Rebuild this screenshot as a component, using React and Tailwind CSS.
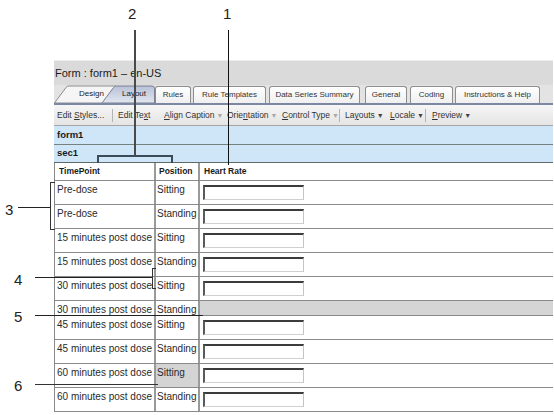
const rows = [
  { t: 'Pre-dose', p: 'Sitting' },
  { t: 'Pre-dose', p: 'Standing' },
  { t: '15 minutes post dose', p: 'Sitting' },
  { t: '15 minutes post dose', p: 'Standing' },
  { t: '30 minutes post dose', p: 'Sitting' },
  { t: '30 minutes post dose', p: 'Standing', short: true, grayRate: true },
  { t: '45 minutes post dose', p: 'Sitting' },
  { t: '45 minutes post dose', p: 'Standing' },
  { t: '60 minutes post dose', p: 'Sitting', grayPos: true },
  { t: '60 minutes post dose', p: 'Standing' },
]

const tabs = [
  { label: 'Rules', cls: 'w-[36px]' },
  { label: 'Rule Templates', cls: 'ml-[2px] w-[73px]' },
  { label: 'Data Series Summary', cls: 'ml-[3px] w-[91px]' },
  { label: 'General', cls: 'ml-[5px] w-[42px]' },
  { label: 'Coding', cls: 'ml-[3px] w-[43px]' },
  { label: 'Instructions & Help', cls: 'ml-[2px] w-[85px]' },
]

function Arrow({ dim }) {
  return <span className={`ml-[2px] text-[7px] ${dim ? 'text-[#a8a8a8]' : 'text-[#444]'}`}>▼</span>
}

function Sep({ w }) {
  return (
    <div className={`${w} h-full flex items-center`}>
      <div className="w-px h-[13px] bg-[#b4b4b4]" />
    </div>
  )
}

function Input() {
  return (
    <div className="ml-[3px] mt-[4px] w-[101px] h-[15px] bg-white border-t-2 border-l-2 border-t-[#3c3c3c] border-l-[#5a5a5a] border-r border-b border-r-[#c4c4c4] border-b-[#d0d0d0]" />
  )
}

export default function App() {
  return (
    <div className="relative w-[554px] h-[415px] bg-white overflow-hidden text-[#222]" style={{ fontFamily: '"Liberation Sans", Arial, sans-serif' }}>
      <div className="ml-[54px] mt-[60px] w-[499px] flex flex-col">
        {/* title */}
        <div className="h-[25px] bg-[#dadada] border-t border-[#ececec] flex items-center pl-[1px] text-[11px] text-[#1a1a1a]">
          Form : form1 – en-US
        </div>

        {/* tabs */}
        <div className="h-[20px] bg-[#e3e3e3] border-b-2 border-[#7c87a3] flex items-end">
          <div className="relative w-[101px] h-[18px] flex items-center text-[8px]">
            <svg className="absolute inset-0" width="101" height="18" viewBox="0 0 101 18">
              <defs>
                <linearGradient id="lay" x1="0" y1="0" x2="0" y2="1">
                  <stop offset="0" stopColor="#b7c1d8" />
                  <stop offset="1" stopColor="#e2e6ef" />
                </linearGradient>
              </defs>
              <path d="M0.5,18 L12,2.5 Q13,1 15,1 L62,1 L62,18 Z" fill="#f5f5f5" stroke="#8c8c8c" />
              <path d="M48,18 L59.5,2.5 Q60.5,1 62.5,1 L98,1 Q100.5,1 100.5,3.5 L100.5,18 Z" fill="url(#lay)" stroke="#7c7f90" />
            </svg>
            <span className="relative pl-[25px] w-[68px]">Design</span>
            <span className="relative">Layout</span>
          </div>
          {tabs.map(t => (
            <div
              key={t.label}
              className={`${t.cls} h-[17px] rounded-t-[3px] border border-b-0 border-[#8e8e8e] bg-gradient-to-b from-white to-[#efefef] flex items-center justify-center text-[8px] text-[#333]`}
            >
              {t.label}
            </div>
          ))}
        </div>

        {/* toolbar */}
        <div className="h-[21px] bg-gradient-to-b from-[#f6f6f6] to-[#e4e4e4] border-b border-[#a6a6a6] flex items-center text-[8.5px] text-[#333] pl-[3px]">
          <span className="w-[55px]">Edit <u>S</u>tyles...</span>
          <Sep w="w-[6px]" />
          <span className="w-[46px]">Edit Te<u>x</u>t</span>
          <span className="w-[63px]"><u>A</u>lign Caption<Arrow dim /></span>
          <span className="w-[55px]">Orie<u>n</u>tation<Arrow dim /></span>
          <span className="w-[57px]"><u>C</u>ontrol Type<Arrow dim /></span>
          <Sep w="w-[6px]" />
          <span className="w-[45px]">La<u>y</u>outs<Arrow /></span>
          <span className="w-[35px]"><u>L</u>ocale<Arrow /></span>
          <Sep w="w-[7px]" />
          <span><u>P</u>review<Arrow /></span>
        </div>

        {/* form / section bars */}
        <div className="h-[19px] bg-[#cfe5f8] border-b border-[#74817f] flex items-center pl-[3px] text-[9.5px] font-bold text-[#1a1a1a]">form1</div>
        <div className="h-[18px] bg-[#cfe5f8] border-b border-[#5e6a68] flex items-center pl-[3px] text-[9.5px] font-bold text-[#1a1a1a]">sec1</div>

        {/* table */}
        <div className="border-l border-[#8a8a8a] text-[10px] text-[#2a2a2a]">
          <div className="h-[18px] flex border-b border-[#8a8a8a] text-[8.5px] font-bold text-[#1a1a1a]">
            <div className="w-[101px] border-r-2 border-[#9a9a9a] pl-[4px] flex items-center">TimePoint</div>
            <div className="w-[44px] border-r-2 border-[#9a9a9a] pl-[3px] flex items-center">Position</div>
            <div className="flex-1 pl-[4px] flex items-center">Heart Rate</div>
          </div>
          {rows.map((r, i) => (
            <div key={i} className={`${r.short ? 'h-[15px]' : 'h-[24px]'} flex border-b border-[#8a8a8a]`}>
              <div className="w-[101px] border-r-2 border-[#9a9a9a] pl-[2px] pt-[1px] whitespace-nowrap">{r.t}</div>
              <div className={`w-[44px] border-r-2 border-[#9a9a9a] pl-[1px] pt-[1px] ${r.grayPos ? 'bg-[#d4d4d4]' : ''}`}>{r.p}</div>
              <div className={`flex-1 ${r.grayRate ? 'bg-[#d5d5d5]' : ''}`}>{!r.short && <Input />}</div>
            </div>
          ))}
        </div>
      </div>

      {/* callouts */}
      <div className="absolute left-[128px] top-[3px] text-[15px] text-[#222]">2</div>
      <div className="absolute left-[223px] top-[3px] text-[15px] text-[#222]">1</div>
      <div className="absolute left-[134px] top-[30px] w-[2px] h-[126px] bg-[#4a4a4a]" />
      <div className="absolute left-[97px] top-[155px] w-[76px] h-[8px] border-t-2 border-l-2 border-r-2 border-[#3c4a5a]" />
      <div className="absolute left-[228px] top-[30px] w-px h-[135px] bg-[#111]" />

      <div className="absolute left-[5px] top-[199px] text-[15px] text-[#222]">3</div>
      <div className="absolute left-[18px] top-[207px] w-[32px] h-px bg-[#222]" />
      <div className="absolute left-[50px] top-[182px] w-[5px] h-[48px] border-t border-l border-b border-[#333]" />

      <div className="absolute left-[14px] top-[269px] text-[15px] text-[#222]">4</div>
      <div className="absolute left-[35px] top-[277px] w-[118px] h-px bg-[#222]" />
      <div className="absolute left-[152px] top-[268px] w-[4px] h-[21px] border-t border-l border-b border-[#333]" />

      <div className="absolute left-[14px] top-[306px] text-[15px] text-[#222]">5</div>
      <div className="absolute left-[35px] top-[315px] w-[168px] h-px bg-[#222]" />

      <div className="absolute left-[14px] top-[375px] text-[15px] text-[#222]">6</div>
      <div className="absolute left-[35px] top-[384px] w-[123px] h-px bg-[#333]" />
    </div>
  )
}
